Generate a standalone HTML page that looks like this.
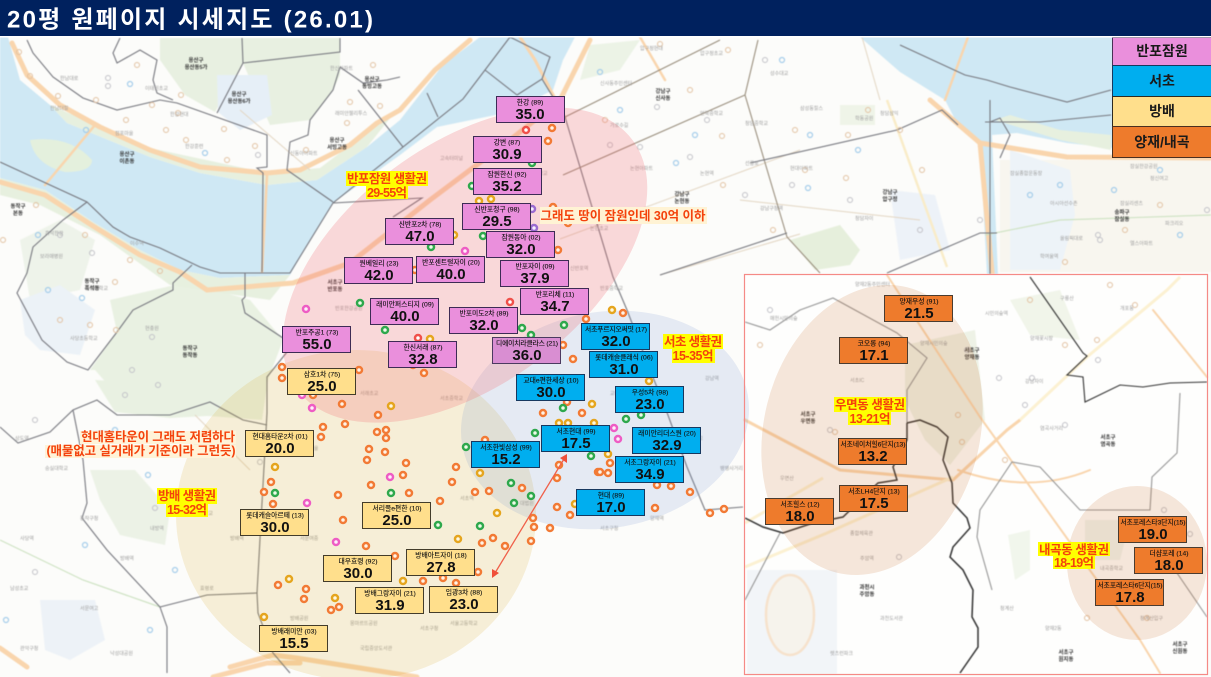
<!DOCTYPE html>
<html lang="ko"><head><meta charset="utf-8"><title>20평 원페이지 시세지도</title>
<style>
html,body{margin:0;padding:0;background:#fff;width:1211px;height:677px;overflow:hidden}
svg{display:block;font-family:"Liberation Sans","Noto Sans CJK KR",sans-serif}
.b{fill:none;stroke:#77787f;stroke-width:1.1}
.k{fill:none;stroke:#333;stroke-width:1.5}
.r{fill:none;stroke:#f9d5ad;stroke-linecap:round;stroke-linejoin:round}
.t{fill:none;stroke:#e3d6c3;stroke-width:1}
.o circle{fill:#fff3e6;stroke:#f27a35;stroke-width:2.5}
.g circle{fill:#eefbe8;stroke:#2ea84c;stroke-width:2.5}
.y circle{fill:#fff8df;stroke:#e5a51e;stroke-width:2.5}
.p circle{fill:#ffeefa;stroke:#ee5cc4;stroke-width:2.5}
.e circle{fill:#fff;stroke:#f0504a;stroke-width:2.5}
.v circle{fill:#f5efff;stroke:#9a6bd0;stroke-width:2.5}
.q circle{fill:none;stroke:#c2c2c8;stroke-width:1}
.w circle{fill:none;stroke:#e2c2a2;stroke-width:1}
.u circle{fill:none;stroke:#a5cdea;stroke-width:1.2}
.n text{font-size:5px;fill:#a0a0a0}
.d text{font-size:5.4px;fill:#333;text-anchor:middle;font-weight:700}
.bx rect{stroke-width:1}
.bx text{text-anchor:middle;fill:#111}
.nm{font-size:6.8px;stroke:#111;stroke-width:.12}
.nb{font-size:15px;font-weight:700}
.pk rect{fill:#ea8fdc;stroke:#3d2b55}
.dp rect{fill:#d98ed2;stroke:#4b3a60}
.bl rect{fill:#00aeef;stroke:#17385f}
.yl rect{fill:#ffdf8c;stroke:#433c2a}
.or rect{fill:#ee7b2c;stroke:#4a3c30}
.a{fill:#f4420c;font-weight:700;text-anchor:middle;font-size:12.5px}
.lg{font-size:14px;font-weight:700;text-anchor:middle;fill:#1a1a1a}
</style></head><body>
<svg width="1211" height="677" viewBox="0 0 1211 677" xmlns="http://www.w3.org/2000/svg">
<defs><filter id="bl" x="0" y="0" width="1211" height="677" filterUnits="userSpaceOnUse" color-interpolation-filters="sRGB"><feGaussianBlur stdDeviation="0.45"/></filter></defs>
<rect width="1211" height="677" fill="#fcfcfa"/>
<g filter="url(#bl)">
<!-- patches -->
<polygon fill="#e8f0e1" points="160,38 340,38 340,75 333,90 310,120 270,125 243,63 215,112 185,95 160,60"/>
<polygon fill="#e6eff7" points="217,75 267,75 272,115 240,130 218,112"/>
<polygon fill="#e9f1e2" points="110,300 175,285 215,290 250,300 283,340 268,380 262,420 130,410 95,370 90,370 117,332"/>
<polygon fill="#e9f1e2" points="95,380 135,382 175,400 240,395 225,415 170,418 115,412"/>
<polygon fill="#ecf2e6" points="90,470 135,470 170,510 165,545 120,535 100,500"/>
<polygon fill="#eef3ea" points="20,240 60,220 95,240 80,290 30,300"/>
<polygon fill="#ecf2f7" points="20,300 60,285 95,310 80,355 40,350 25,335"/>
<polygon fill="#edf2f7" points="40,600 95,600 105,640 70,660 45,650"/>
<polygon fill="#f8f6ef" points="1000,160 1211,160 1211,272 1000,272"/>
<polygon fill="#edf3f8" points="1010,150 1070,170 1075,215 1060,270 1010,270"/>
<polygon fill="#edf2f8" points="890,190 935,195 950,250 900,260"/>
<polygon fill="#e6efdc" points="790,240 840,225 860,250 850,265 815,270"/>
<polygon fill="#eff4e8" points="840,105 875,105 875,125 840,125"/>
<polygon fill="#ecf3e6" points="590,45 640,40 620,70 580,80"/>
<polygon fill="#eff1e2" points="1045,37 1112,37 1112,60 1075,56"/>
<!-- river -->
<polygon fill="#cfe8f4" points="0,37 8,37 20,80 50,105 67,123 150,157 200,173 267,185 317,180 367,147 400,120 443,65 480,37 575,37 563,60 553,90 510,112 437,127 400,155 333,203 310,240 290,275 220,278 180,270 140,250 93,222 45,190 0,178"/>
<polygon fill="#cfe8f4" points="860,37 900,72 945,100 958,125 980,145 987,275 998,275 992,135 1017,133 1067,143 1113,148 1211,160 1211,37 1045,37 1075,56 1112,60 1112,37"/>
<path fill="#e4f0dd" d="M30 140Q70 135 92 160 92 172 65 172 35 165 30 140Z"/>
<polygon fill="#e7f0df" points="50,105 150,148 267,173 320,168 370,130 395,112 367,147 317,180 267,185 200,173 150,157 67,123"/>
<polygon fill="#e7f0df" points="995,120 1060,140 1111,150 1111,135 1060,130 1010,115"/>
<polygon fill="#e7f0df" points="0,178 45,190 93,222 140,250 180,270 220,278 290,275 270,300 215,292 170,285 100,235 40,205 0,195"/>
<!-- roads -->
<path class="r" stroke-width="5" d="M12 43L27 75 60 105 100 127 150 150 200 167 267 173 300 170 350 145 377 123 400 110 435 70 470 40"/>
<path class="r" stroke-width="5" d="M0 182L45 195 93 226 140 255 180 272 207 290 293 283 350 263 430 200 510 140 560 100 590 40"/>
<path class="r" stroke-width="3" d="M565 118L535 60 520 37"/>
<path class="r" stroke-width="2.5" d="M267 175L262 272M95 125L45 185"/>
<path class="r" stroke-width="5" d="M930 100L980 143 993 283M980 143L1067 157 1211 158"/>
<path class="r" stroke-width="2.5" d="M968 37L945 100M640 37L665 80"/>
<path stroke="#f9ecc8" fill="none" stroke-width="2.5" d="M887 100L947 267"/>
<path class="r" stroke-width="5" d="M0 648L27 667M230 667L273 655 297 658 417 677M213 677L267 663 300 663"/>
<path class="t" d="M240 110L310 170M740 200L920 220M560 239L800 150M660 275L800 234M860 30L880 100M195 415L250 470"/>
<path fill="none" stroke="#cfe3c4" stroke-width="1.2" d="M0 540L83 580 160 607M1060 220L1211 215M985 235L1060 220"/>
<!-- boundaries -->
<path class="b" d="M0 162L87 202 113 227 130 237 160 248 200 267 220 273 290 273 333 203 463 99 485 70 510 37M485 70L517 95M510 37L550 57 542 79 517 95M542 79L565 117 613 277 627 310 650 370 665 407 687 467 705 510 743 507"/>
<path class="b" d="M87 202L63 220 33 247 27 273 17 293 42 340 67 362 88 370 117 332 133 310 173 290 173 283 192 265"/>
<path class="b" d="M245 273V297L242 300 245 313 283 338M287 352L267 377V413L257 593 258 613 273 653 290 673"/>
<path class="b" d="M27 40L33 53 53 77 83 98 117 110 160 100 177 103 267 135V167L257 168 263 173 262 272"/>
<path class="b" d="M120 38L113 53 117 63 140 50 157 60 153 80 157 93 173 100M242 38L243 63 217 113M243 63L340 52V38M340 67L333 90 310 120 308 135 290 142 287 170 333 202M340 67L363 83 387 80 400 77M358 90L403 147M427 93L438 117M333 203L422 198 393 217"/>
<path class="b" d="M0 427L18 443 50 432 73 410 97 400 117 415 170 415 210 402 243 420 267 425M73 410L83 460 87 503 82 518 107 550 147 593 160 607 167 627V673M160 607L207 595 257 593"/>
<path class="b" style="stroke:#9a8f7e" d="M565 117L720 40M563 175L745 95 758 40M745 95L787 237 820 273"/>
<path class="b" d="M750 163L897 130 942 110 958 125M887 273L980 233 997 233M660 275L787 233"/>
<path class="b" d="M990 100V275M990 122L1000 118 1010 135 1000 158M900 45L965 75 987 80 1010 87 1067 102 1111 90M985 122L1040 122 1111 115"/>
<!-- POIs north -->
<g class="w"><circle cx="19" cy="52" r="2.5"/><circle cx="30" cy="76" r="2.5"/><circle cx="58" cy="96" r="2.5"/><circle cx="96" cy="100" r="2.5"/><circle cx="126" cy="120" r="2.5"/><circle cx="152" cy="105" r="2.5"/><circle cx="178" cy="113" r="2.5"/><circle cx="166" cy="130" r="2.5"/><circle cx="186" cy="140" r="2.5"/><circle cx="224" cy="129" r="2.5"/><circle cx="227" cy="160" r="2.5"/><circle cx="255" cy="146" r="2.5"/><circle cx="306" cy="150" r="2.5"/><circle cx="137" cy="65" r="2.5"/><circle cx="181" cy="95" r="2.5"/><circle cx="350" cy="102" r="2.5"/><circle cx="373" cy="65" r="2.5"/><circle cx="380" cy="106" r="2.5"/><circle cx="347" cy="123" r="2.5"/><circle cx="3" cy="240" r="2.5"/><circle cx="36" cy="205" r="2.5"/><circle cx="85" cy="235" r="2.5"/><circle cx="130" cy="260" r="2.5"/><circle cx="160" cy="271" r="2.5"/><circle cx="115" cy="282" r="2.5"/><circle cx="60" cy="320" r="2.5"/><circle cx="116" cy="330" r="2.5"/><circle cx="90" cy="325" r="2.5"/><circle cx="660" cy="44" r="2.5"/><circle cx="690" cy="90" r="2.5"/><circle cx="728" cy="50" r="2.5"/><circle cx="605" cy="120" r="2.5"/><circle cx="722" cy="136" r="2.5"/><circle cx="723" cy="185" r="2.5"/><circle cx="795" cy="130" r="2.5"/><circle cx="773" cy="230" r="2.5"/><circle cx="805" cy="170" r="2.5"/><circle cx="848" cy="135" r="2.5"/><circle cx="868" cy="110" r="2.5"/><circle cx="846" cy="178" r="2.5"/><circle cx="900" cy="130" r="2.5"/><circle cx="922" cy="170" r="2.5"/><circle cx="1125" cy="230" r="2.5"/><circle cx="1160" cy="205" r="2.5"/><circle cx="1065" cy="262" r="2.5"/></g>
<g class="q"><circle cx="108" cy="78" r="2.5"/><circle cx="108" cy="86" r="2.5"/><circle cx="258" cy="155" r="2.5"/><circle cx="60" cy="235" r="2.5"/><circle cx="92" cy="253" r="2.5"/><circle cx="152" cy="337" r="2.5"/><circle cx="132" cy="370" r="2.5"/><circle cx="158" cy="385" r="2.5"/><circle cx="610" cy="145" r="2.5"/><circle cx="640" cy="147" r="2.5"/><circle cx="657" cy="107" r="2.5"/><circle cx="707" cy="120" r="2.5"/><circle cx="690" cy="157" r="2.5"/><circle cx="765" cy="60" r="2.5"/><circle cx="745" cy="195" r="2.5"/><circle cx="792" cy="185" r="2.5"/><circle cx="850" cy="200" r="2.5"/><circle cx="920" cy="230" r="2.5"/><circle cx="980" cy="220" r="2.5"/><circle cx="1098" cy="235" r="2.5"/><circle cx="1207" cy="210" r="2.5"/><circle cx="1100" cy="240" r="2.5"/><circle cx="35" cy="420" r="2.5"/><circle cx="125" cy="395" r="2.5"/><circle cx="35" cy="572" r="2.5"/><circle cx="155" cy="508" r="2.5"/><circle cx="260" cy="462" r="2.5"/></g>
<g class="u"><circle cx="130" cy="84" r="2.5"/><circle cx="205" cy="153" r="2.5"/><circle cx="86" cy="130" r="2.5"/><circle cx="38" cy="235" r="2.5"/><circle cx="48" cy="290" r="2.5"/><circle cx="82" cy="298" r="2.5"/><circle cx="600" cy="72" r="2.5"/><circle cx="620" cy="110" r="2.5"/><circle cx="695" cy="135" r="2.5"/><circle cx="676" cy="163" r="2.5"/><circle cx="782" cy="60" r="2.5"/><circle cx="810" cy="135" r="2.5"/><circle cx="858" cy="150" r="2.5"/><circle cx="808" cy="188" r="2.5"/><circle cx="1030" cy="195" r="2.5"/><circle cx="1060" cy="185" r="2.5"/><circle cx="1114" cy="190" r="2.5"/><circle cx="1160" cy="170" r="2.5"/><circle cx="1180" cy="235" r="2.5"/><circle cx="115" cy="430" r="2.5"/><circle cx="148" cy="475" r="2.5"/><circle cx="85" cy="545" r="2.5"/><circle cx="175" cy="570" r="2.5"/><circle cx="150" cy="630" r="2.5"/><circle cx="6" cy="620" r="2.5"/></g>
<g class="n">
<text x="60" y="80">한남대로</text><text x="145" y="90">이태원초교</text><text x="170" y="116">한강현대</text><text x="185" y="148">한강훈련</text><text x="50" y="110">한남더힐</text><text x="115" y="135">점포마을</text><text x="290" y="155">신동아아파트</text><text x="330" y="70">한신아파트</text><text x="335" y="115">래미안첼리투스</text>
<text x="40" y="258">보라매병원</text><text x="85" y="290">중앙대학교</text><text x="70" y="340">사당초등학교</text><text x="145" y="330">현충원</text><text x="130" y="245">이수역</text><text x="45" y="235">흑석한강</text>
<text x="640" y="50">압구정현대</text><text x="600" y="85">신사동주민센터</text><text x="610" y="127">가로수길</text><text x="700" y="55">압구정초교</text><text x="700" y="115">언북중학교</text><text x="630" y="170">논현아파트</text><text x="745" y="125">청담중학교</text><text x="700" y="175">논현역</text><text x="745" y="165">선릉로</text><text x="760" y="210">강남구청역</text><text x="770" y="75">성수대교</text><text x="800" y="110">삼성동힐스</text><text x="855" y="120">학동공원</text><text x="790" y="170">현대아파트</text><text x="855" y="220">청담자이</text><text x="880" y="115">청담삼익</text>
<text x="1010" y="175">잠실종합운동장</text><text x="1050" y="205">아시아선수촌</text><text x="1120" y="205">잠실리센츠</text><text x="1150" y="180">정신여고</text><text x="1060" y="240">올림픽대로</text><text x="1130" y="245">엘스아파트</text><text x="1165" y="225">파크리오</text><text x="1040" y="258">학여울역</text><text x="1130" y="168">잠실한강공원</text>
<text x="15" y="440">상도역</text><text x="45" y="470">숭실대학교</text><text x="90" y="435">상도중학교</text><text x="130" y="450">남성역</text><text x="20" y="540">사당역</text><text x="80" y="520">동작구청</text><text x="10" y="590">남성초교</text><text x="120" y="560">방배역</text><text x="80" y="610">서문여고</text><text x="150" y="530">내방역</text><text x="110" y="655">낙성대공원</text><text x="20" y="650">관악구청</text>
<text x="200" y="590">효령로</text><text x="190" y="515">방배중학교</text><text x="230" y="540">방배역</text>
<text x="300" y="540">서문여중</text><text x="290" y="620">방배공원</text><text x="350" y="625">몽마르뜨공원</text><text x="360" y="650">국립중앙도서관</text><text x="420" y="630">서초구청</text><text x="450" y="625">서울고등학교</text><text x="300" y="450">서래마을</text><text x="360" y="395">서래초교</text><text x="440" y="400">서초중학교</text><text x="460" y="500">서초역</text><text x="520" y="505">대법원</text><text x="600" y="530">서초구청</text><text x="650" y="520">양재역</text><text x="610" y="395">교대역</text><text x="680" y="440">서일중학교</text><text x="705" y="380">강남역</text><text x="720" y="470">뱅뱅사거리</text><text x="360" y="280">경원중학교</text><text x="440" y="160">고속터미널</text><text x="520" y="175">세화고등학교</text><text x="590" y="230">논현초교</text><text x="570" y="270">신반포역</text><text x="600" y="290">반포중학교</text><text x="335" y="310">반포한강공원</text>
</g>
<g class="d">
<text x="127" y="156">용산구</text><text x="127" y="163">이촌동</text><text x="18" y="208">동작구</text><text x="18" y="215">본동</text><text x="92" y="283">동작구</text><text x="92" y="290">흑석동</text><text x="190" y="350">동작구</text><text x="190" y="357">동작동</text><text x="196" y="62">용산구</text><text x="196" y="69">용산동5가</text><text x="239" y="96">용산구</text><text x="239" y="103">용산동6가</text><text x="337" y="142">용산구</text><text x="337" y="149">서빙고동</text><text x="372" y="81">용산구</text><text x="372" y="88">동빙고동</text><text x="335" y="284">서초구</text><text x="335" y="291">반포동</text><text x="663" y="93">강남구</text><text x="663" y="100">신사동</text><text x="682" y="196">강남구</text><text x="682" y="203">논현동</text><text x="890" y="194">강남구</text><text x="890" y="201">압구정</text><text x="1122" y="214">송파구</text><text x="1122" y="221">잠실동</text>
</g>
<!-- inset background -->
<rect x="744" y="274" width="463" height="400" fill="#fefefd"/>
<polygon fill="#eef2e6" points="905,345 975,330 985,420 950,465 925,440 905,400"/>
<polygon fill="#f1f5ea" points="1010,300 1060,290 1080,340 1030,335"/>
<polygon fill="#f1f6ec" points="1008,535 1030,530 1030,570 1015,580"/>
<polygon fill="#f0f4ee" points="1085,520 1130,520 1120,560 1085,560"/>
<rect x="747" y="570" width="90" height="104" fill="#f2f5f8"/>
<ellipse cx="790" cy="615" rx="24" ry="40" fill="#f6f3ec" stroke="#f6e2cc" stroke-width="2.5"/>
<path class="r" stroke-width="3" d="M745 420L840 470 953 480 1007 430 1020 420"/>
<path stroke="#fcf1d2" fill="none" stroke-width="3" d="M1020 420L1087 357 1167 290 1180 277M745 523L823 478M745 567L827 533 953 477"/>
<path class="r" stroke-width="2" d="M887 275L980 417 1140 640 1160 673M1153 310L1207 377M958 470Q1030 495 1090 470"/>
<path class="b" style="stroke:#969696" d="M800 310L833 298 897 333 927 358 907 390V423M745 322L770 330 800 310M1180 393L1177 453 1152 477 1150 510 1080 510 1040 467 1012 462 980 510 977 537 992 590M1177 573L1207 617M780 533L745 600"/>
<path class="k" d="M907 423L920 420 937 427 948 437 943 460 952 483 953 503 967 518 970 528 953 547 950 557 963 570 973 590 972 617 978 628V647L960 673"/>
<path class="k" d="M907 423V440L893 467 897 480 878 483 843 517 813 523 783 533 763 527 745 518"/>
<path class="k" style="stroke-width:1.1" d="M1030 277L1083 353 1087 356 1067 375 1083 377 1085 402 1120 385 1143 387 1170 383 1207 382"/>
<g class="w"><circle cx="835" cy="432" r="2.5"/><circle cx="760" cy="345" r="2.5"/><circle cx="958" cy="415" r="2.5"/><circle cx="962" cy="442" r="2.5"/><circle cx="1030" cy="300" r="2.5"/><circle cx="1065" cy="345" r="2.5"/><circle cx="1110" cy="285" r="2.5"/><circle cx="1135" cy="305" r="2.5"/><circle cx="1097" cy="340" r="2.5"/><circle cx="1147" cy="618" r="2.5"/><circle cx="1087" cy="618" r="2.5"/><circle cx="1005" cy="460" r="2.5"/></g>
<g class="q"><circle cx="770" cy="310" r="2.5"/><circle cx="830" cy="430" r="2.5"/><circle cx="967" cy="350" r="2.5"/><circle cx="999" cy="378" r="2.5"/><circle cx="1032" cy="378" r="2.5"/><circle cx="1065" cy="425" r="2.5"/><circle cx="1025" cy="405" r="2.5"/><circle cx="1098" cy="360" r="2.5"/><circle cx="1106" cy="550" r="2.5"/><circle cx="899" cy="557" r="2.5"/><circle cx="1190" cy="534" r="2.5"/><circle cx="1164" cy="510" r="2.5"/></g>
<g class="n">
<text x="855" y="286">양재2동주민센터</text><text x="770" y="320">매헌시민의숲</text><text x="850" y="382">서초IC</text><text x="920" y="345">양재시민의숲</text><text x="985" y="315">시민의숲역</text><text x="1030" y="340">양재꽃시장</text><text x="1025" y="383">강남자이</text><text x="1040" y="430">염곡사거리</text><text x="1120" y="310">개포동</text><text x="1060" y="300">구룡산</text><text x="1040" y="555">헌인릉</text><text x="1100" y="570">내곡중학교</text><text x="1140" y="620">청계산입구</text><text x="830" y="655">렛츠런파크</text><text x="860" y="560">주암역</text><text x="1045" y="630">양재2동</text><text x="1000" y="610">청계산</text><text x="880" y="620">과천도서관</text><text x="780" y="480">우면산</text><text x="850" y="535">종합체육관</text>
</g>
<g class="d">
<text x="972" y="352">서초구</text><text x="972" y="359">양재동</text><text x="808" y="416">서초구</text><text x="808" y="423">우면동</text><text x="1108" y="439">서초구</text><text x="1108" y="446">염곡동</text><text x="867" y="589">과천시</text><text x="867" y="596">주암동</text><text x="1066" y="654">서초구</text><text x="1066" y="661">원지동</text><text x="1180" y="646">서초구</text><text x="1180" y="653">신원동</text>
</g>
</g>
<!-- catchments -->
<ellipse cx="356" cy="515" rx="180" ry="165" fill="#dca528" fill-opacity=".16"/>
<ellipse cx="605" cy="420" rx="145" ry="108" transform="rotate(-10 605 420)" fill="#7896d2" fill-opacity=".17"/>
<ellipse cx="465" cy="265" rx="209" ry="120" transform="rotate(-36.7 465 265)" fill="#f0646e" fill-opacity=".23"/>
<ellipse cx="872" cy="430" rx="108" ry="147" transform="rotate(14 872 430)" fill="#c86e32" fill-opacity=".17"/>
<ellipse cx="1137" cy="563" rx="70" ry="77" fill="#c86e32" fill-opacity=".17"/>
<rect x="744.5" y="274.5" width="463" height="400" fill="none" stroke="#f58a86" stroke-width="1.2"/>
<!-- markers -->
<g class="o"><circle cx="552" cy="128" r="3"/><circle cx="548" cy="141" r="3"/><circle cx="553" cy="207" r="3"/><circle cx="568" cy="223" r="3"/><circle cx="558" cy="250" r="3"/><circle cx="415" cy="270" r="3"/><circle cx="424" cy="373" r="3"/><circle cx="413" cy="365" r="3"/><circle cx="563" cy="345" r="3"/><circle cx="573" cy="359" r="3"/><circle cx="586" cy="319" r="3"/><circle cx="623" cy="313" r="3"/><circle cx="282" cy="367" r="3"/><circle cx="282" cy="378" r="3"/><circle cx="359" cy="370" r="3"/><circle cx="342" cy="404" r="3"/><circle cx="313" cy="395" r="3"/><circle cx="378" cy="415" r="3"/><circle cx="377" cy="432" r="3"/><circle cx="386" cy="430" r="3"/><circle cx="386" cy="438" r="3"/><circle cx="323" cy="427" r="3"/><circle cx="345" cy="424" r="3"/><circle cx="321" cy="437" r="3"/><circle cx="271" cy="482" r="3"/><circle cx="264" cy="492" r="3"/><circle cx="273" cy="504" r="3"/><circle cx="369" cy="449" r="3"/><circle cx="385" cy="452" r="3"/><circle cx="367" cy="460" r="3"/><circle cx="406" cy="463" r="3"/><circle cx="456" cy="467" r="3"/><circle cx="403" cy="475" r="3"/><circle cx="371" cy="485" r="3"/><circle cx="409" cy="493" r="3"/><circle cx="338" cy="495" r="3"/><circle cx="452" cy="482" r="3"/><circle cx="475" cy="492" r="3"/><circle cx="489" cy="491" r="3"/><circle cx="522" cy="488" r="3"/><circle cx="440" cy="501" r="3"/><circle cx="557" cy="507" r="3"/><circle cx="570" cy="515" r="3"/><circle cx="533" cy="518" r="3"/><circle cx="534" cy="527" r="3"/><circle cx="550" cy="528" r="3"/><circle cx="531" cy="541" r="3"/><circle cx="493" cy="538" r="3"/><circle cx="482" cy="543" r="3"/><circle cx="505" cy="546" r="3"/><circle cx="478" cy="572" r="3"/><circle cx="366" cy="546" r="3"/><circle cx="395" cy="556" r="3"/><circle cx="343" cy="520" r="3"/><circle cx="557" cy="478" r="3"/><circle cx="559" cy="465" r="3"/><circle cx="485" cy="440" r="3"/><circle cx="543" cy="413" r="3"/><circle cx="582" cy="413" r="3"/><circle cx="567" cy="402" r="3"/><circle cx="598" cy="472" r="3"/><circle cx="610" cy="463" r="3"/><circle cx="600" cy="472" r="3"/><circle cx="608" cy="473" r="3"/><circle cx="657" cy="485" r="3"/><circle cx="671" cy="486" r="3"/><circle cx="690" cy="492" r="3"/><circle cx="655" cy="508" r="3"/><circle cx="710" cy="513" r="3"/><circle cx="724" cy="509" r="3"/><circle cx="278" cy="585" r="3"/><circle cx="306" cy="589" r="3"/><circle cx="304" cy="599" r="3"/><circle cx="331" cy="610" r="3"/><circle cx="339" cy="607" r="3"/><circle cx="423" cy="581" r="3"/><circle cx="443" cy="578" r="3"/><circle cx="456" cy="583" r="3"/></g>
<g class="g"><circle cx="532" cy="163" r="3"/><circle cx="472" cy="186" r="3"/><circle cx="483" cy="236" r="3"/><circle cx="431" cy="247" r="3"/><circle cx="360" cy="303" r="3"/><circle cx="385" cy="330" r="3"/><circle cx="522" cy="328" r="3"/><circle cx="531" cy="335" r="3"/><circle cx="564" cy="325" r="3"/><circle cx="563" cy="408" r="3"/><circle cx="535" cy="433" r="3"/><circle cx="466" cy="447" r="3"/><circle cx="591" cy="456" r="3"/><circle cx="511" cy="483" r="3"/><circle cx="531" cy="496" r="3"/><circle cx="514" cy="503" r="3"/><circle cx="391" cy="493" r="3"/><circle cx="438" cy="525" r="3"/><circle cx="480" cy="526" r="3"/><circle cx="275" cy="493" r="3"/><circle cx="626" cy="419" r="3"/><circle cx="641" cy="415" r="3"/></g>
<g class="y"><circle cx="479" cy="201" r="3"/><circle cx="491" cy="199" r="3"/><circle cx="454" cy="235" r="3"/><circle cx="430" cy="339" r="3"/><circle cx="391" cy="406" r="3"/><circle cx="275" cy="467" r="3"/><circle cx="480" cy="473" r="3"/><circle cx="497" cy="513" r="3"/><circle cx="458" cy="539" r="3"/><circle cx="559" cy="423" r="3"/><circle cx="568" cy="423" r="3"/><circle cx="594" cy="423" r="3"/><circle cx="592" cy="404" r="3"/><circle cx="575" cy="504" r="3"/><circle cx="649" cy="381" r="3"/><circle cx="608" cy="454" r="3"/><circle cx="612" cy="310" r="3"/><circle cx="289" cy="579" r="3"/><circle cx="335" cy="598" r="3"/><circle cx="264" cy="617" r="3"/><circle cx="403" cy="581" r="3"/></g>
<g class="p"><circle cx="465" cy="251" r="3"/><circle cx="306" cy="309" r="3"/><circle cx="302" cy="395" r="3"/><circle cx="312" cy="408" r="3"/><circle cx="390" cy="477" r="3"/><circle cx="307" cy="503" r="3"/><circle cx="336" cy="542" r="3"/><circle cx="614" cy="428" r="3"/><circle cx="618" cy="439" r="3"/></g>
<g class="e"><circle cx="526" cy="130" r="3"/><circle cx="510" cy="302" r="3"/><circle cx="418" cy="338" r="3"/></g>
<g class="v"><circle cx="532" cy="209" r="3"/><circle cx="534" cy="228" r="3"/></g>
<!-- arrow -->
<path d="M564 459L495 573" stroke="#f0604a" stroke-width="1.3" fill="none"/>
<polygon points="567,454 567,463 560,458" fill="#f0503a"/>
<polygon points="492,578 492,569 499,573" fill="#f0503a"/>
<!-- annotations -->
<rect x="346" y="171" width="82" height="15" fill="#ffff00"/><rect x="366" y="186" width="42" height="13" fill="#ffff00"/>
<text class="a" x="387" y="183" textLength="80">반포잠원 생활권</text><text class="a" x="387" y="197" textLength="40">29-55억</text>
<rect x="540" y="207" width="167" height="17" fill="#fff3d4"/>
<text class="a" x="623" y="220" textLength="165">그래도 땅이 잠원인데 30억 이하</text>
<rect x="663" y="334" width="60" height="15" fill="#ffff00"/><rect x="672" y="349" width="43" height="14" fill="#ffff00"/>
<text class="a" x="693" y="346" textLength="58">서초 생활권</text><text class="a" x="693" y="360" textLength="41">15-35억</text>
<rect x="834" y="397" width="72" height="15" fill="#ffff00"/><rect x="848" y="412" width="43" height="13" fill="#ffff00"/>
<text class="a" x="870" y="409" textLength="70">우면동 생활권</text><text class="a" x="870" y="423" textLength="41">13-21억</text>
<rect x="1038" y="542" width="72" height="14" fill="#ffff00"/><rect x="1053" y="556" width="42" height="13" fill="#ffff00"/>
<text class="a" x="1074" y="554" textLength="70">내곡동 생활권</text><text class="a" x="1074" y="567" textLength="40">18-19억</text>
<rect x="157" y="488" width="60" height="16" fill="#ffff00"/><rect x="166" y="504" width="42" height="13" fill="#ffff00"/>
<text class="a" x="187" y="500" textLength="58">방배 생활권</text><text class="a" x="187" y="514" textLength="40">15-32억</text>
<rect x="80" y="431" width="156" height="13" fill="#fff3d8"/><rect x="45" y="445" width="191" height="13" fill="#fff3d8"/>
<text class="a" x="158" y="441" textLength="154" font-size="12">현대홈타운이 그래도 저렴하다</text><text class="a" x="141" y="455" textLength="189">(매물없고 실거래가 기준이라 그런듯)</text>
<!-- pink boxes -->
<g class="bx pk">
<rect x="496.5" y="96.5" width="68" height="26"/><text class="nm" x="530" y="104.5">한강 (89)</text><text class="nb" x="530" y="119">35.0</text>
<rect x="473.5" y="136.5" width="68" height="26"/><text class="nm" x="507" y="144.5">강변 (87)</text><text class="nb" x="507" y="159">30.9</text>
<rect x="473.5" y="168.5" width="68" height="26"/><text class="nm" x="507" y="176.5">잠원한신 (92)</text><text class="nb" x="507" y="191">35.2</text>
<rect x="462.5" y="203.5" width="68" height="26"/><text class="nm" x="497" y="211.5">신반포청구 (98)</text><text class="nb" x="497" y="226">29.5</text>
<rect x="385.5" y="218.5" width="68" height="26"/><text class="nm" x="420" y="226.5">신반포2차 (78)</text><text class="nb" x="420" y="241">47.0</text>
<rect x="486.5" y="231.5" width="68" height="26"/><text class="nm" x="521" y="239.5">잠원동아 (02)</text><text class="nb" x="521" y="254">32.0</text>
<rect x="344.5" y="257.5" width="68" height="26"/><text class="nm" x="379" y="265.5">원베일리 (23)</text><text class="nb" x="379" y="280">42.0</text>
<rect x="416.5" y="256.5" width="68" height="26"/><text class="nm" x="451" y="264.5">반포센트럴자이 (20)</text><text class="nb" x="451" y="279">40.0</text>
<rect x="500.5" y="260.5" width="68" height="26"/><text class="nm" x="535" y="268.5">반포자이 (09)</text><text class="nb" x="535" y="283">37.9</text>
<rect x="520.5" y="288.5" width="68" height="26"/><text class="nm" x="555" y="296.5">반포리체 (11)</text><text class="nb" x="555" y="311">34.7</text>
<rect x="370.5" y="298.5" width="68" height="26"/><text class="nm" x="405" y="306.5">래미안퍼스티지 (09)</text><text class="nb" x="405" y="321">40.0</text>
<rect x="449.5" y="307.5" width="68" height="26"/><text class="nm" x="484" y="315.5">반포미도2차 (89)</text><text class="nb" x="484" y="330">32.0</text>
<rect x="282.5" y="326.5" width="68" height="26"/><text class="nm" x="317" y="334.5">반포주공1 (73)</text><text class="nb" x="317" y="349">55.0</text>
<rect x="388.5" y="341.5" width="68" height="26"/><text class="nm" x="423" y="349.5">한신서래 (87)</text><text class="nb" x="423" y="364">32.8</text>
</g>
<g class="bx dp"><rect x="492.5" y="337.5" width="68" height="26"/><text class="nm" x="527" y="345.5" textLength="62">디에이치라클라스 (21)</text><text class="nb" x="527" y="360">36.0</text></g>
<!-- blue boxes -->
<g class="bx bl">
<rect x="581.5" y="323.5" width="68" height="26"/><text class="nm" x="616" y="331.5" textLength="62">서초푸르지오써밋 (17)</text><text class="nb" x="616" y="346">32.0</text>
<rect x="589.5" y="351.5" width="68" height="26"/><text class="nm" x="624" y="359.5">롯데캐슬클래식 (06)</text><text class="nb" x="624" y="374">31.0</text>
<rect x="516.5" y="374.5" width="68" height="26"/><text class="nm" x="551" y="382.5">교대e편한세상 (10)</text><text class="nb" x="551" y="397">30.0</text>
<rect x="615.5" y="386.5" width="68" height="26"/><text class="nm" x="650" y="394.5">우성5차 (98)</text><text class="nb" x="650" y="409">23.0</text>
<rect x="541.5" y="425.5" width="68" height="26"/><text class="nm" x="576" y="433.5">서초현대 (99)</text><text class="nb" x="576" y="448">17.5</text>
<rect x="632.5" y="427.5" width="68" height="26"/><text class="nm" x="667" y="435.5">래미안리더스원 (20)</text><text class="nb" x="667" y="450">32.9</text>
<rect x="471.5" y="441.5" width="68" height="26"/><text class="nm" x="506" y="449.5">서초한빛삼성 (99)</text><text class="nb" x="506" y="464">15.2</text>
<rect x="615.5" y="456.5" width="68" height="26"/><text class="nm" x="650" y="464.5">서초그랑자이 (21)</text><text class="nb" x="650" y="479">34.9</text>
<rect x="576.5" y="489.5" width="68" height="26"/><text class="nm" x="611" y="497.5">현대 (89)</text><text class="nb" x="611" y="512">17.0</text>
</g>
<!-- yellow boxes -->
<g class="bx yl">
<rect x="287.5" y="368.5" width="68" height="26"/><text class="nm" x="322" y="376.5">삼호1차 (75)</text><text class="nb" x="322" y="391">25.0</text>
<rect x="245.5" y="430.5" width="68" height="26"/><text class="nm" x="280" y="438.5">현대홈타운2차 (01)</text><text class="nb" x="280" y="453">20.0</text>
<rect x="362.5" y="502.5" width="68" height="26"/><text class="nm" x="397" y="510.5">서리풀e편한 (10)</text><text class="nb" x="397" y="525">25.0</text>
<rect x="240.5" y="509.5" width="68" height="26"/><text class="nm" x="275" y="517.5">롯데캐슬아르떼 (13)</text><text class="nb" x="275" y="532">30.0</text>
<rect x="323.5" y="555.5" width="68" height="26"/><text class="nm" x="358" y="563.5">대우효령 (92)</text><text class="nb" x="358" y="578">30.0</text>
<rect x="406.5" y="549.5" width="68" height="26"/><text class="nm" x="441" y="557.5">방배아트자이 (18)</text><text class="nb" x="441" y="572">27.8</text>
<rect x="355.5" y="587.5" width="68" height="26"/><text class="nm" x="390" y="595.5">방배그랑자이 (21)</text><text class="nb" x="390" y="610">31.9</text>
<rect x="429.5" y="586.5" width="68" height="26"/><text class="nm" x="464" y="594.5">임광3차 (88)</text><text class="nb" x="464" y="609">23.0</text>
<rect x="259.5" y="625.5" width="68" height="26"/><text class="nm" x="294" y="633.5">방배래미안 (03)</text><text class="nb" x="294" y="648">15.5</text>
</g>
<!-- orange boxes -->
<g class="bx or">
<rect x="884.5" y="295.5" width="68" height="26"/><text class="nm" x="919" y="303.5">양재우성 (91)</text><text class="nb" x="919" y="318">21.5</text>
<rect x="839.5" y="337.5" width="68" height="26"/><text class="nm" x="874" y="345.5">코오롱 (94)</text><text class="nb" x="874" y="360">17.1</text>
<rect x="838.5" y="438.5" width="68" height="26"/><text class="nm" x="873" y="446.5" textLength="65">서초네이처힐6단지(13)</text><text class="nb" x="873" y="461">13.2</text>
<rect x="839.5" y="485.5" width="68" height="26"/><text class="nm" x="874" y="493.5">서초LH4단지 (13)</text><text class="nb" x="874" y="508">17.5</text>
<rect x="765.5" y="498.5" width="68" height="26"/><text class="nm" x="800" y="506.5">서초힐스 (12)</text><text class="nb" x="800" y="521">18.0</text>
<rect x="1118.5" y="516.5" width="68" height="26"/><text class="nm" x="1153" y="524.5" textLength="65">서초포레스타3단지(15)</text><text class="nb" x="1153" y="539">19.0</text>
<rect x="1134.5" y="547.5" width="68" height="26"/><text class="nm" x="1169" y="555.5">더샵포레 (14)</text><text class="nb" x="1169" y="570">18.0</text>
<rect x="1095.5" y="579.5" width="68" height="26"/><text class="nm" x="1130" y="587.5" textLength="65">서초포레스타6단지(15)</text><text class="nb" x="1130" y="602">17.8</text>
</g>
<!-- legend -->
<rect x="1112.5" y="37.5" width="99" height="28" fill="#ea8fdc" stroke="#4a2f55"/>
<rect x="1112.5" y="65.5" width="99" height="31" fill="#00aeef" stroke="#17385f"/>
<rect x="1112.5" y="96.5" width="99" height="30" fill="#ffdf8c" stroke="#2e2a20"/>
<rect x="1112.5" y="126.5" width="99" height="31" fill="#ee7b2c" stroke="#4a2f20"/>
<text class="lg" x="1162" y="56">반포잠원</text><text class="lg" x="1162" y="86">서초</text><text class="lg" x="1162" y="116">방배</text><text class="lg" x="1162" y="147">양재/내곡</text>
<!-- header -->
<rect width="1211" height="36" fill="#00215e"/><rect y="36" width="1211" height="1.5" fill="#fff"/>
<text x="7" y="27.5" fill="#fff" font-size="24" font-weight="700" textLength="366">20평 원페이지 시세지도 (26.01)</text>
</svg>
</body></html>
